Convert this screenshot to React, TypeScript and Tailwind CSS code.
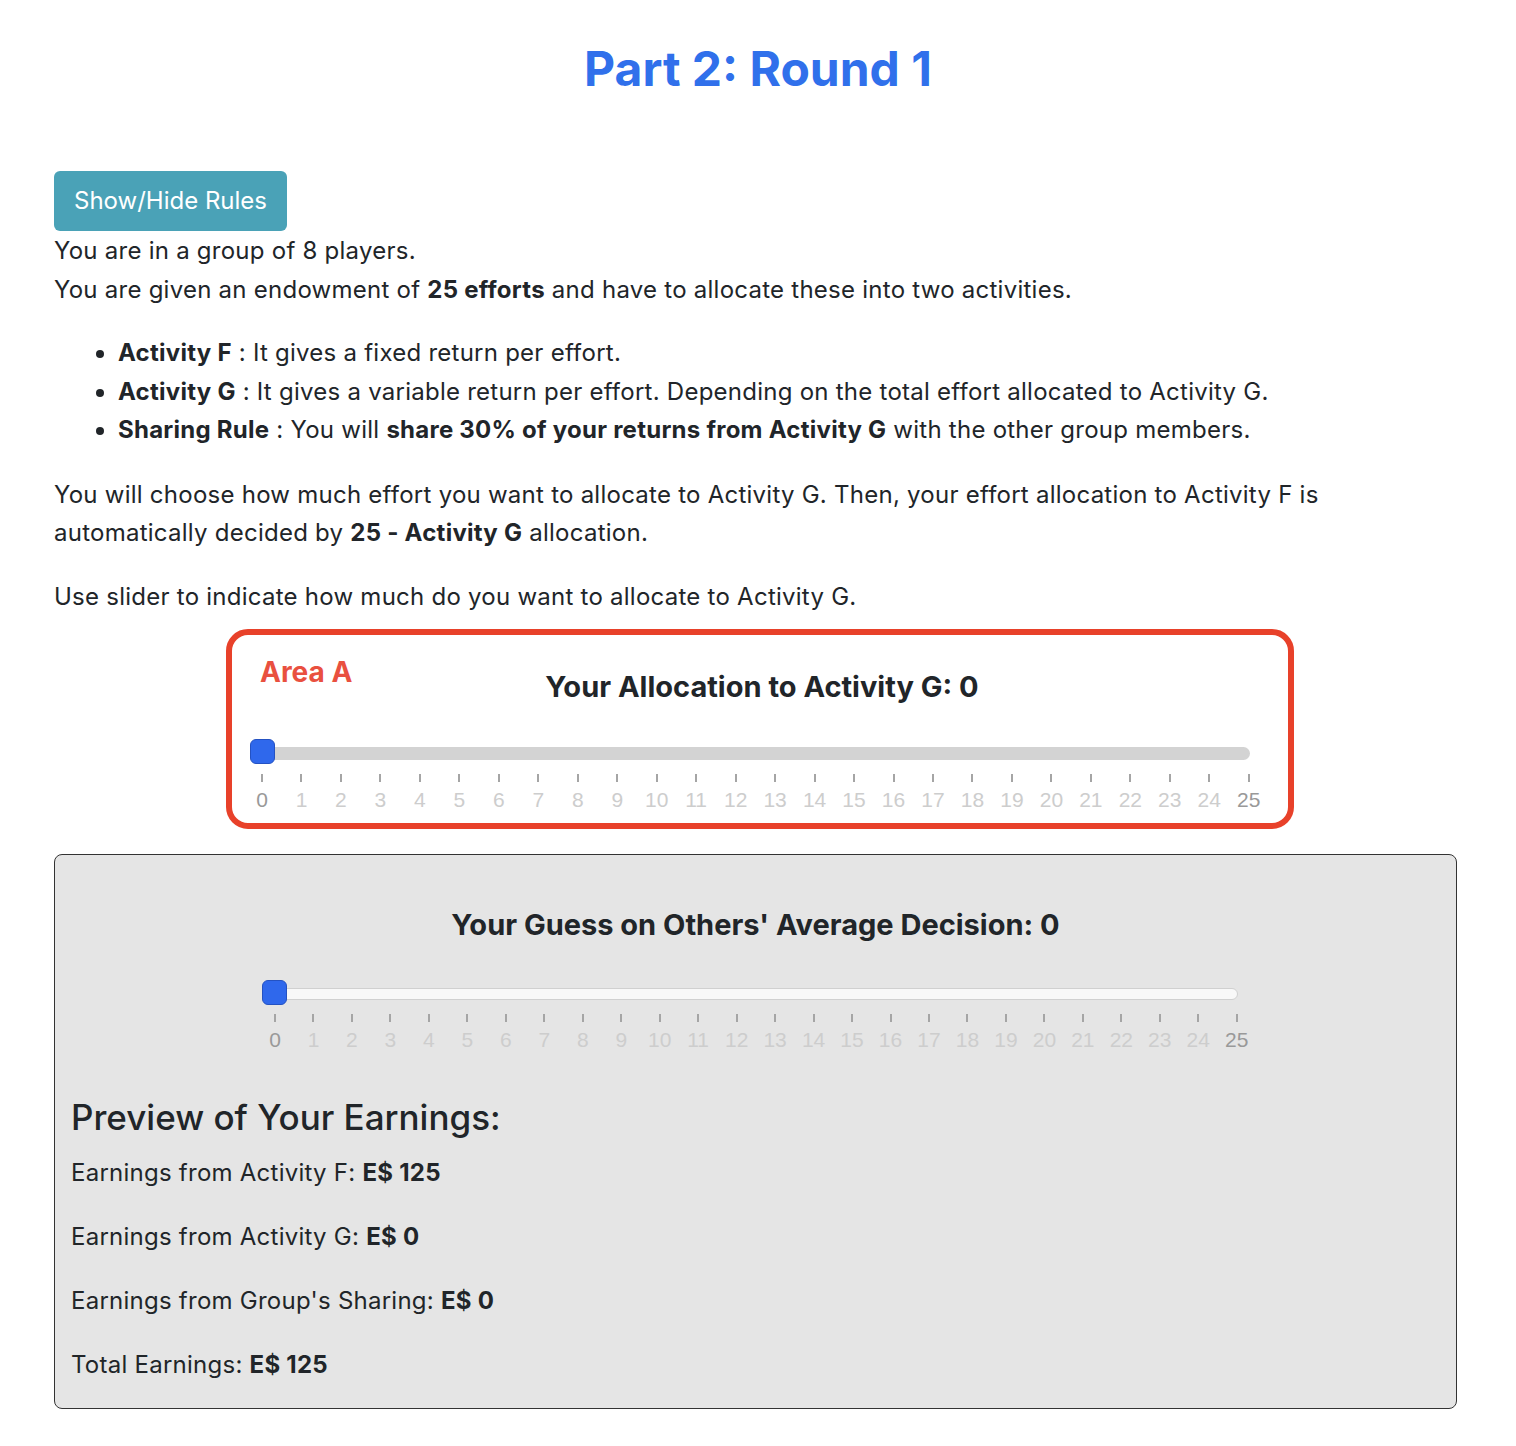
const ticks = Array.from({ length: 26 }, (_, i) => i);

function Slider({
  trackW,
  tickOffset,
  tickW,
  light,
}: {
  trackW: string;
  tickOffset: string;
  tickW: string;
  light?: boolean;
}) {
  return (
    <div className={`relative ${trackW}`}>
      <div
        className={
          light
            ? "h-[12px] rounded-full bg-[#f8f8f8] border border-[#d0d0d0]"
            : "h-[13px] rounded-full bg-[#d3d3d3]"
        }
      />
      <div className="absolute left-0 top-[-8px] h-[25px] w-[25px] rounded-[6px] bg-[#2f68ec] border border-[#2452c2]" />
      <div className={`mt-[14px] flex justify-between tracking-normal ${tickOffset} ${tickW}`}>
        {ticks.map((t) => (
          <div key={t} className="w-0 flex flex-col items-center">
            <div className="h-[8px] w-[2px] shrink-0 bg-[#a5a5a5]" />
            <div
              className={`mt-[6px] text-[21px] leading-[24px] font-['Liberation_Sans',sans-serif] ${
                t === 0 || t === 25 ? "text-[#999]" : "text-[#cdcdcd]"
              }`}
            >
              {t}
            </div>
          </div>
        ))}
      </div>
    </div>
  );
}

export default function App() {
  return (
    <div className="min-h-screen bg-white font-['Inter',sans-serif] text-[#212529] text-[24px] tracking-[0.25px]">
      <h1 className="pt-[36px] text-center text-[48px] leading-[65px] font-bold tracking-normal text-[#3070eb]">
        Part 2: Round 1
      </h1>

      <div className="pl-[54px] pr-[59px] pt-[70px] pb-[38px]">
        <button className="h-[60px] px-[20px] rounded-[6px] bg-[#4aa2b7] text-white text-[24px] tracking-normal">
          Show/Hide Rules
        </button>
        <div className="leading-[39px]">
          <div>You are in a group of 8 players.</div>
          <div>
            You are given an endowment of <b>25 efforts</b> and have to allocate these into two
            activities.
          </div>
        </div>
        <ul className="mt-[25px] pl-[64px] list-disc leading-[38.5px]">
          <li>
            <b>Activity F</b> : It gives a fixed return per effort.
          </li>
          <li>
            <b>Activity G</b> : It gives a variable return per effort. Depending on the total effort
            allocated to Activity G.
          </li>
          <li>
            <b>Sharing Rule</b> : You will <b>share 30% of your returns from Activity G</b> with the
            other group members.
          </li>
        </ul>
        <p className="mt-[26px] leading-[38px]">
          You will choose how much effort you want to allocate to Activity G. Then, your effort
          allocation to Activity F is
          <br />
          automatically decided by <b>25 - Activity G</b> allocation.
        </p>
        <p className="mt-[26px] leading-[38px]">
          Use slider to indicate how much do you want to allocate to Activity G.
        </p>

        <div className="relative mt-[13px] ml-[172px] w-[1068px] rounded-[22px] border-[6px] border-[#e8412a] pt-[34px] pb-[11px]">
          <div className="absolute left-[28px] top-[21px] text-[28px] leading-[32px] font-bold tracking-normal text-[#e9503f]">
            Area A
          </div>
          <div className="text-center text-[29px] leading-[36px] font-bold tracking-normal pl-[4px]">
            Your Allocation to Activity G: 0
          </div>
          <div className="mt-[42px] ml-[18px]">
            <Slider trackW="w-[1000px]" tickOffset="ml-[12px]" tickW="w-[987px]" />
          </div>
        </div>

        <div className="mt-[25px] rounded-[8px] border border-[#333] bg-[#e5e5e5] px-[16px] pt-[52px] pb-[27px]">
          <div className="text-center text-[29px] leading-[36px] font-bold tracking-normal">
            Your Guess on Others' Average Decision: 0
          </div>
          <div className="mt-[45px] ml-[191px]">
            <Slider trackW="w-[976px]" tickOffset="ml-[13px]" tickW="w-[962px]" light />
          </div>
          <h2 className="mt-[45px] text-[35px] leading-[41px] font-medium tracking-normal">
            Preview of Your Earnings:
          </h2>
          <div className="mt-[19px] flex flex-col gap-[32px] leading-[32px]">
            <div>
              Earnings from Activity F: <b>E$ 125</b>
            </div>
            <div>
              Earnings from Activity G: <b>E$ 0</b>
            </div>
            <div>
              Earnings from Group's Sharing: <b>E$ 0</b>
            </div>
            <div>
              Total Earnings: <b>E$ 125</b>
            </div>
          </div>
        </div>
      </div>
    </div>
  );
}
